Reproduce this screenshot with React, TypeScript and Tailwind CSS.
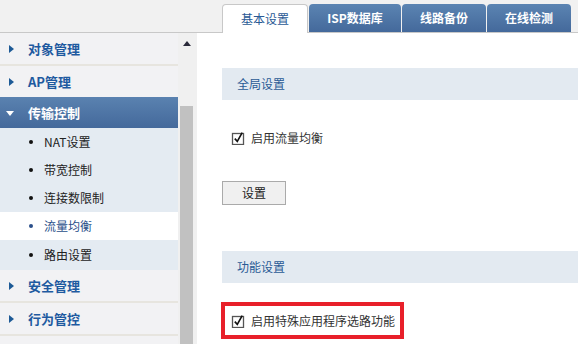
import React from "react";

const font = "font-['Noto_Sans_CJK_SC','Noto_Sans',sans-serif]";

function Tri({ down, white }: { down?: boolean; white?: boolean }) {
  return (
    <svg width="10" height="10" viewBox="0 0 10 10" className="shrink-0">
      {down ? (
        <path d="M1 3 L9 3 L5 8 Z" fill={white ? "#ffffff" : "#1d5a96"} />
      ) : (
        <path d="M3 1 L8 5 L3 9 Z" fill={white ? "#ffffff" : "#1d5a96"} />
      )}
    </svg>
  );
}

function Check() {
  return (
    <svg width="14" height="14" viewBox="0 0 14 14" className="shrink-0">
      <rect x="1.5" y="2.5" width="11" height="11" fill="#fff" stroke="#555" strokeWidth="1.3" />
      <path d="M3.8 7.6 L6.3 10.4 L11.2 1.6" fill="none" stroke="#111" strokeWidth="1.6" />
    </svg>
  );
}

function Menu({ label, last }: { label: string; last?: boolean }) {
  return (
    <div
      className={`h-[33px] flex items-center bg-[#f2f2f4] ${
        last ? "" : "border-b-2 border-[#e7e5df]"
      }`}
    >
      <div className="w-[28px] pl-[6px]">
        <Tri />
      </div>
      <span className="text-[13px] font-bold text-[#1e5aa0]">{label}</span>
    </div>
  );
}

function Sub({ label, active, h = "h-[28px]" }: { label: string; active?: boolean; h?: string }) {
  return (
    <div className={`${h} flex items-center ${active ? "bg-white" : "bg-[#e4ebf2]"}`}>
      <span
        className={`ml-[29px] w-[4px] h-[4px] rounded-full ${active ? "bg-[#2a4f8a]" : "bg-[#111]"}`}
      />
      <span className={`ml-[11px] text-[12px] ${active ? "text-[#2a4f8a]" : "text-[#222]"}`}>
        {label}
      </span>
    </div>
  );
}

export default function App() {
  const tabs = [
    { label: "ISP数据库", w: "w-[92px]" },
    { label: "线路备份", w: "w-[84px]" },
    { label: "在线检测", w: "w-[84px]" },
  ];
  return (
    <div className={`w-[578px] h-[344px] overflow-hidden flex flex-col bg-white ${font}`}>
      <div className="h-[33px] shrink-0 bg-[#f1f1f1] border-b border-[#c8c8c8] flex items-end pl-[222px] gap-[1px]">
        <div className="w-[86px] h-[29px] -mb-px bg-white border border-b-0 border-[#c8c8c8] rounded-t-[4px] flex items-center justify-center text-[12px] text-[#2a5a95]">
          基本设置
        </div>
        {tabs.map((t) => (
          <div
            key={t.label}
            className={`${t.w} h-[28px] rounded-t-[4px] bg-gradient-to-b from-[#5b84b2] to-[#44699b] flex items-center justify-center text-[12px] font-bold text-white`}
          >
            {t.label}
          </div>
        ))}
      </div>
      <div className="flex flex-1 min-h-0">
        <div className="w-[178px] shrink-0 flex flex-col bg-[#f2f2f4]">
          <Menu label="对象管理" />
          <div className="h-[31px] flex items-center bg-[#f2f2f4]">
            <div className="w-[28px] pl-[6px]">
              <Tri />
            </div>
            <span className="text-[13px] font-bold text-[#1e5aa0]">AP管理</span>
          </div>
          <div className="h-[31px] flex items-center bg-gradient-to-b from-[#5a82b0] to-[#44699b]">
            <div className="w-[28px] pl-[5px]">
              <Tri down white />
            </div>
            <span className="text-[13px] font-bold text-white">传输控制</span>
          </div>
          <Sub label="NAT设置" />
          <Sub label="带宽控制" />
          <Sub label="连接数限制" />
          <Sub label="流量均衡" active />
          <Sub label="路由设置" h="h-[30px]" />
          <Menu label="安全管理" />
          <Menu label="行为管控" />
          <div className="flex-1 bg-[#f2f2f4]" />
        </div>
        <div className="w-[19px] shrink-0 bg-[#f0f0f0] flex flex-col items-start">
          <div className="h-[73px] shrink-0 w-full flex justify-center pt-[8px] pr-[2px]">
            <svg width="8" height="5" viewBox="0 0 8 5">
              <path d="M0 5 L4 0 L8 5 Z" fill="#2a2a3a" />
            </svg>
          </div>
          <div className="ml-[2px] w-[13px] flex-1 bg-[#c1c1c1]" />
        </div>
        <div className="flex-1 pl-[25px] pt-[35px] text-[12px] text-[#333]">
          <div className="h-[32px] bg-[#e3eaf1] flex items-center pl-[15px] text-[#2a5a95]">
            全局设置
          </div>
          <div className="mt-[31px] h-[14px] flex items-center gap-[6px] pl-[9px]">
            <Check />
            <span>启用流量均衡</span>
          </div>
          <button className="mt-[36px] w-[64px] h-[24px] bg-[#f0f0f0] border border-[#aaaaaa] text-[12px] text-[#222] flex items-center justify-center">
            设置
          </button>
          <div className="mt-[46px] h-[32px] bg-[#e3eaf1] flex items-center pl-[15px] text-[#2a5a95]">
            功能设置
          </div>
          <div className="mt-[19px] -ml-px w-[183px] h-[37px] border-4 border-[#e8202a] pl-[6px] flex items-center">
            <div className="flex items-center gap-[6px] h-[14px]">
              <Check />
              <span className="whitespace-nowrap">启用特殊应用程序选路功能</span>
            </div>
          </div>
        </div>
      </div>
    </div>
  );
}
